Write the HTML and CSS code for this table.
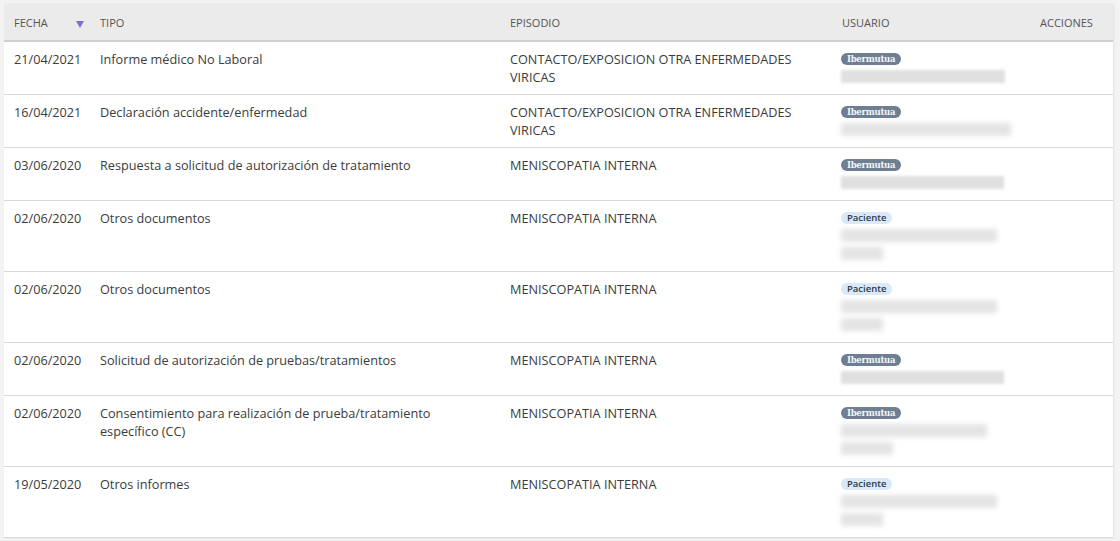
FILE: index.html
```html
<!DOCTYPE html>
<html lang="es">
<head>
<meta charset="utf-8">
<link rel="stylesheet" href="styles.css">
</head>
<body>
<div class="panel">
<table class="grid">
  <colgroup>
    <col class="c-fecha"><col class="c-tipo"><col class="c-epi"><col class="c-usr"><col class="c-acc">
  </colgroup>
  <thead>
    <tr>
      <th><div class="sort">FECHA<span class="arrow"></span></div></th>
      <th>TIPO</th>
      <th>EPISODIO</th>
      <th>USUARIO</th>
      <th>ACCIONES</th>
    </tr>
  </thead>
  <tbody>
    <tr>
      <td class="date">21/04/2021</td><td>Informe médico No Laboral</td><td>CONTACTO/EXPOSICION OTRA ENFERMEDADES VIRICAS</td>
      <td><div class="user"><span class="badge ib">Ibermutua</span><div class="blur" style="width:164px"></div></div></td><td></td>
    </tr>
    <tr>
      <td class="date">16/04/2021</td><td>Declaración accidente/enfermedad</td><td>CONTACTO/EXPOSICION OTRA ENFERMEDADES VIRICAS</td>
      <td><div class="user"><span class="badge ib">Ibermutua</span><div class="blur soft" style="width:170px"></div></div></td><td></td>
    </tr>
    <tr>
      <td class="date">03/06/2020</td><td>Respuesta a solicitud de autorización de tratamiento</td><td>MENISCOPATIA INTERNA</td>
      <td><div class="user"><span class="badge ib">Ibermutua</span><div class="blur" style="width:163px"></div></div></td><td></td>
    </tr>
    <tr>
      <td class="date">02/06/2020</td><td>Otros documentos</td><td>MENISCOPATIA INTERNA</td>
      <td><div class="user"><span class="badge pa">Paciente</span><div class="blur soft" style="width:156px"></div><div class="blur soft" style="width:42px"></div></div></td><td></td>
    </tr>
    <tr>
      <td class="date">02/06/2020</td><td>Otros documentos</td><td>MENISCOPATIA INTERNA</td>
      <td><div class="user"><span class="badge pa">Paciente</span><div class="blur soft" style="width:156px"></div><div class="blur soft" style="width:42px"></div></div></td><td></td>
    </tr>
    <tr>
      <td class="date">02/06/2020</td><td>Solicitud de autorización de pruebas/tratamientos</td><td>MENISCOPATIA INTERNA</td>
      <td><div class="user"><span class="badge ib">Ibermutua</span><div class="blur" style="width:163px"></div></div></td><td></td>
    </tr>
    <tr>
      <td class="date">02/06/2020</td><td>Consentimiento para realización de prueba/tratamiento específico (CC)</td><td>MENISCOPATIA INTERNA</td>
      <td><div class="user"><span class="badge ib">Ibermutua</span><div class="blur soft" style="width:146px"></div><div class="blur soft" style="width:52px"></div></div></td><td></td>
    </tr>
    <tr>
      <td class="date">19/05/2020</td><td>Otros informes</td><td>MENISCOPATIA INTERNA</td>
      <td><div class="user"><span class="badge pa">Paciente</span><div class="blur soft" style="width:156px"></div><div class="blur soft" style="width:42px"></div></div></td><td></td>
    </tr>
  </tbody>
</table>
</div>
</body>
</html>
```
FILE: styles.css
```css
html, body {
  margin: 0;
  padding: 0;
  background: #f3f3f3;
}
body {
  padding: 4px 7px 0 4px;
  font-family: "Open Sans", "Liberation Sans", sans-serif;
  color: #3b3b3b;
  height: 541px;
  box-sizing: border-box;
  overflow: hidden;
}
.panel {
  background: #ffffff;
  box-shadow: 1px 0 2px rgba(0,0,0,0.08);
}
.grid {
  width: 1109px;
  border-collapse: collapse;
  table-layout: fixed;
}
.c-fecha { width: 86px; }
.c-tipo { width: 410px; }
.c-epi { width: 332px; }
.c-usr { width: 198px; }
.c-acc { width: 83px; }

th {
  background: #ebebeb;
  height: 37px;
  padding: 0 10px;
  text-align: left;
  font-weight: 400;
  font-size: 11px;
  color: #555;
  border-bottom: 2px solid #cfcfcf;
  vertical-align: middle;
  box-sizing: border-box;
}
.sort {
  display: flex;
  align-items: center;
  justify-content: space-between;
}
.arrow {
  width: 0;
  height: 0;
  border-left: 4px solid transparent;
  border-right: 4px solid transparent;
  border-top: 7px solid #7474d8;
  margin-top: 4px;
  margin-right: -4px;
}
td {
  font-size: 12.7px;
  line-height: 18px;
  padding: 8px 10px 8px;
  vertical-align: top;
  border-bottom: 1px solid #d9d9d9;
  word-wrap: break-word;
}
td.date {
  white-space: nowrap;
  padding-right: 0;
}
.user {
  display: flex;
  flex-direction: column;
  align-items: flex-start;
}
.badge {
  display: block;
  font-size: 9.5px;
  line-height: 12px;
  height: 12px;
  padding: 0 6px;
  border-radius: 6px;
  margin: 3px 0 3px -1px;
}
.ib {
  background: #6e7f93;
  color: #f4f6f8;
  font-weight: 700;
  font-family: "DejaVu Serif Condensed", "DejaVu Serif", serif;
  letter-spacing: -0.3px;
}
.pa {
  background: #d9e9f8;
  color: #2f3a46;
  font-weight: 600;
}
.blur {
  height: 13px;
  margin: 2px 0 3px -1px;
  background: #e0e0e0;
  filter: blur(1.5px);
}
.blur.soft {
  background: #e4e4e4;
  filter: blur(2.5px);
}
```
